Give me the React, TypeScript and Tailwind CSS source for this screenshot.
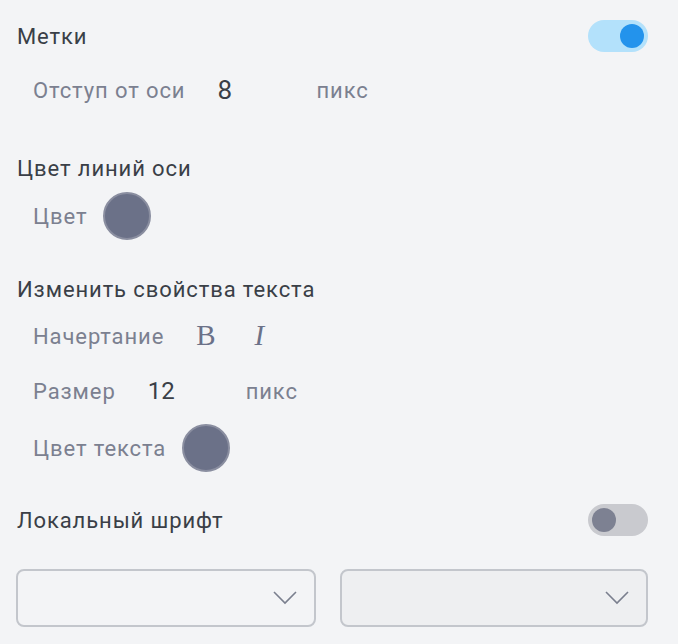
import React from 'react';

const Toggle = ({ on }: { on: boolean }) => (
  <div
    className={`w-[60px] h-8 rounded-full flex items-center px-1 ${
      on ? 'bg-[#b3e1fb] justify-end' : 'bg-[#c9cacf] justify-start'
    }`}
  >
    <div className={`w-6 h-6 rounded-full ${on ? 'bg-[#2393ec]' : 'bg-[#7d8192]'}`} />
  </div>
);

const Swatch = () => (
  <div className="w-12 h-12 rounded-full bg-[#6b7188] border-2 border-[#8a8ea0]" />
);

const Chevron = () => (
  <svg width="24" height="14" viewBox="0 0 24 14" fill="none">
    <path d="M1 1l11 11L23 1" stroke="#7a7f8e" strokeWidth="1.6" />
  </svg>
);

const Select = ({ disabled }: { disabled?: boolean }) => (
  <div
    className={`h-[58px] rounded-lg border-2 border-[#c3c6cc] flex items-center justify-end pr-[17px] ${
      disabled ? 'bg-[#eeeff1]' : 'bg-[#f3f4f6]'
    }`}
  >
    <Chevron />
  </div>
);

export default function App() {
  return (
    <div
      className="w-[678px] h-[644px] bg-[#f3f4f6] px-4 pt-5 text-[22px] tracking-[0.9px] text-[#3a3f47]"
      style={{ fontFamily: 'Roboto, "Noto Sans", sans-serif' }}
    >
      {/* Метки */}
      <div className="h-8 flex items-center justify-between pr-[14px]">
        <span className="pl-[1px]">Метки</span>
        <Toggle on />
      </div>
      <div className="h-10 mt-[18px] flex items-center pl-[17px] text-[#7b8090]">
        <span>Отступ от оси</span>
        <span className="ml-8 w-[99px] text-[26px] tracking-normal text-[#3a3f47]">8</span>
        <span>пикс</span>
      </div>

      {/* Цвет линий оси */}
      <div className="h-8 mt-[42px] flex items-center pl-[1px]">Цвет линий оси</div>
      <div className="h-12 mt-2 flex items-center gap-4 pl-[17px] text-[#7b8090]">
        <span>Цвет</span>
        <Swatch />
      </div>

      {/* Изменить свойства текста */}
      <div className="h-8 mt-[33px] flex items-center pl-[1px]">Изменить свойства текста</div>
      <div className="h-10 mt-[11px] flex items-center pl-[17px] text-[#7b8090]">
        <span>Начертание</span>
        <span
          className="ml-8 text-[29px] text-[#6b7188]"
          style={{ fontFamily: '"Liberation Serif", serif' }}
        >
          B
        </span>
        <span
          className="ml-[38px] text-[29px] italic text-[#6b7188]"
          style={{ fontFamily: '"Liberation Serif", serif' }}
        >
          I
        </span>
      </div>
      <div className="h-10 mt-[15px] flex items-center pl-[17px] text-[#7b8090]">
        <span>Размер</span>
        <span className="ml-8 w-[98px] text-[24px] tracking-normal text-[#3a3f47]">12</span>
        <span>пикс</span>
      </div>
      <div className="h-12 mt-[13px] flex items-center gap-4 pl-[17px] text-[#7b8090]">
        <span>Цвет текста</span>
        <Swatch />
      </div>

      {/* Локальный шрифт */}
      <div className="h-8 mt-8 flex items-center justify-between pr-[14px]">
        <span className="pl-[1px]">Локальный шрифт</span>
        <Toggle on={false} />
      </div>
      <div className="mt-[33px] flex gap-6 pr-[14px]">
        <div className="w-[300px]">
          <Select />
        </div>
        <div className="flex-1">
          <Select disabled />
        </div>
      </div>
    </div>
  );
}
